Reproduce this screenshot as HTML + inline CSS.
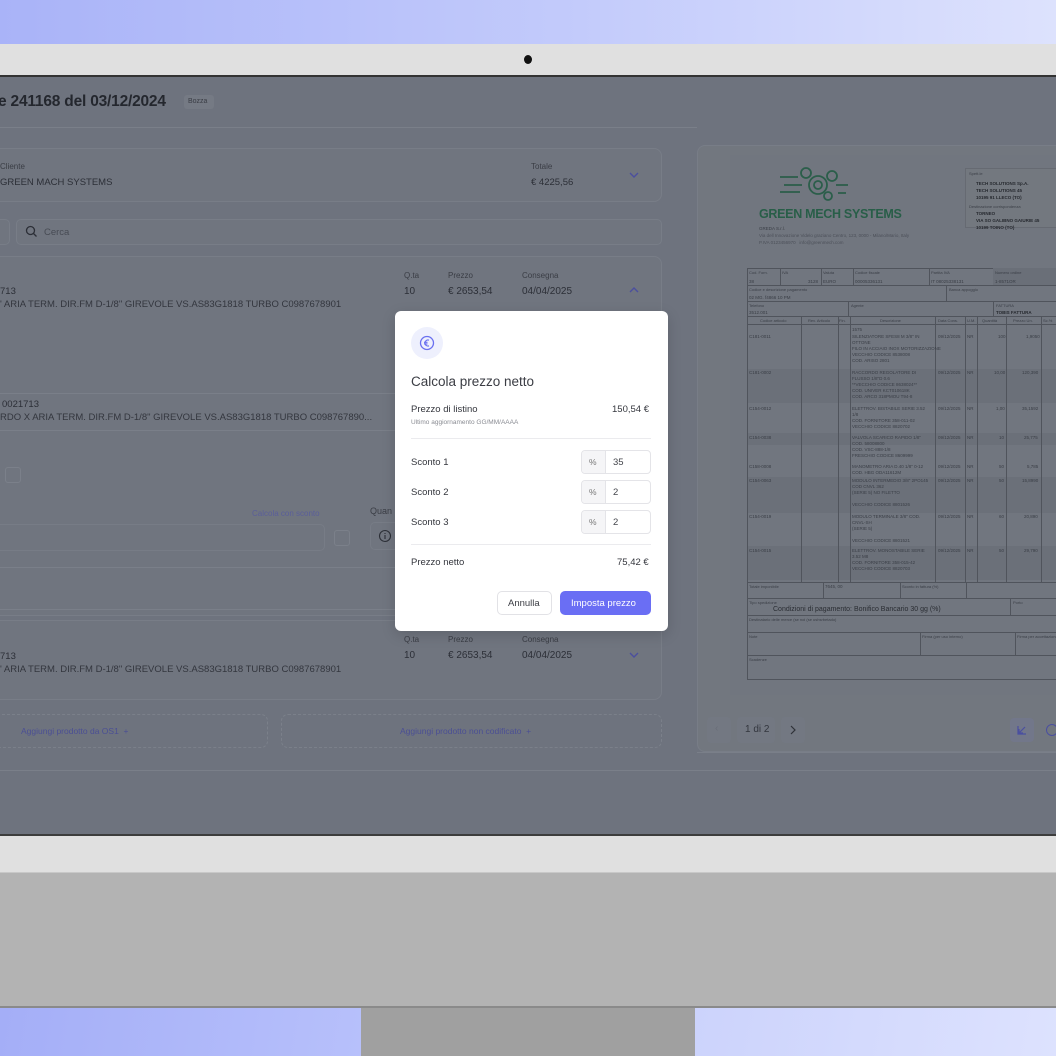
<!DOCTYPE html>
<html><head><meta charset="utf-8"><style>
*{margin:0;padding:0;box-sizing:border-box}
body{width:1056px;height:1056px;overflow:hidden;position:relative;font-family:"Liberation Sans",sans-serif;background:#b3b3b3}
.a{position:absolute}
.t{position:absolute;white-space:nowrap;color:#2c2f37}
.card{position:absolute;background:#70757f;border:1px solid #787d87;border-radius:8px}
.hl{position:absolute;height:1px;background:#7a7f89}
.dl{position:absolute;background:#50545c}
.dt{position:absolute;white-space:nowrap;color:#3a3e46;font-size:4.5px}
</style></head><body>
<div class="a" style="left:0;top:0;width:1056px;height:44px;background:linear-gradient(90deg,#a9b3f8 0%,#c3cbfb 55%,#dde2fd 100%)"></div>
<div class="a" style="left:0;top:44px;width:1056px;height:32px;background:#e0e0e0"></div>
<div class="a" style="left:524px;top:55px;width:8px;height:9px;border-radius:50%;background:#111"></div>
<div class="a" style="left:0;top:75px;width:1056px;height:2px;background:#333"></div>
<div class="a" style="left:0;top:77px;width:1056px;height:757px;background:#6e737e;overflow:hidden"></div>
<div class="a" style="left:0;top:834px;width:1056px;height:2px;background:#3d3d3d"></div>
<div class="a" style="left:0;top:836px;width:1056px;height:36px;background:#e0e0e0"></div>
<div class="a" style="left:0;top:872px;width:1056px;height:1px;background:#c8c8c8"></div>
<div class="a" style="left:0;top:1006px;width:1056px;height:2px;background:#8a8a8a"></div>
<div class="a" style="left:0;top:1008px;width:361px;height:48px;background:linear-gradient(100deg,#a4aef7,#b7c0fb)"></div>
<div class="a" style="left:361px;top:1008px;width:334px;height:48px;background:#a0a0a0"></div>
<div class="a" style="left:695px;top:1008px;width:361px;height:48px;background:linear-gradient(100deg,#ccd3fc,#dde2fe)"></div>

<div class="t" style="left:-2px;top:93px;font-size:15.5px;font-weight:bold;color:#24272e;letter-spacing:-0.2px">e 241168 del 03/12/2024</div>
<div class="a" style="left:184px;top:95px;width:30px;height:14px;background:#757a84;border-radius:3px"></div>
<div class="t" style="left:188px;top:98px;font-size:7px;color:#3a3d45">Bozza</div>
<div class="hl" style="left:0;top:127px;width:697px"></div>

<div class="card" style="left:-10px;top:148px;width:672px;height:54px"></div>
<div class="t" style="left:0;top:162px;font-size:8px;color:#3a3d45">Cliente</div>
<div class="t" style="left:0;top:177px;font-size:9.5px">GREEN MACH SYSTEMS</div>
<div class="t" style="left:531px;top:162px;font-size:8px;color:#3a3d45">Totale</div>
<div class="t" style="left:531px;top:177px;font-size:9.5px">€ 4225,56</div>
<svg class="a" style="left:628px;top:170px" width="12" height="10"><path d="M2 3l4 4 4-4" stroke="#4b4f9e" stroke-width="1.4" fill="none"/></svg>

<div class="card" style="left:-10px;top:219px;width:20px;height:26px;border-radius:5px"></div>
<div class="card" style="left:16px;top:219px;width:646px;height:26px;border-radius:5px"></div>
<svg class="a" style="left:25px;top:225px" width="13" height="13"><circle cx="5.5" cy="5.5" r="4" stroke="#2c2f37" stroke-width="1.3" fill="none"/><path d="M8.5 8.5l3 3" stroke="#2c2f37" stroke-width="1.3"/></svg>
<div class="t" style="left:44px;top:227px;font-size:9.5px;color:#474b54">Cerca</div>

<div class="card" style="left:-10px;top:256px;width:672px;height:360px"></div>
<div class="t" style="left:0;top:286px;font-size:9.5px">713</div>
<div class="t" style="left:0;top:299px;font-size:9.5px;color:#33363e">' ARIA TERM. DIR.FM D-1/8" GIREVOLE VS.AS83G1818 TURBO C0987678901</div>
<div class="t" style="left:404px;top:271px;font-size:8px;color:#3a3d45">Q.ta</div>
<div class="t" style="left:448px;top:271px;font-size:8px;color:#3a3d45">Prezzo</div>
<div class="t" style="left:522px;top:271px;font-size:8px;color:#3a3d45">Consegna</div>
<div class="t" style="left:404px;top:286px;font-size:10px">10</div>
<div class="t" style="left:448px;top:286px;font-size:10px">€ 2653,54</div>
<div class="t" style="left:522px;top:286px;font-size:10px">04/04/2025</div>
<svg class="a" style="left:628px;top:285px" width="12" height="10"><path d="M2 7l4-4 4 4" stroke="#4b4f9e" stroke-width="1.4" fill="none"/></svg>

<div class="hl" style="left:0;top:393px;width:662px"></div>
<div class="hl" style="left:0;top:430px;width:662px"></div>
<div class="t" style="left:2px;top:399px;font-size:9.5px">0021713</div>
<div class="t" style="left:0;top:412px;font-size:9.5px;color:#33363e">RDO X ARIA TERM. DIR.FM D-1/8" GIREVOLE VS.AS83G1818 TURBO C098767890...</div>
<div class="a" style="left:5px;top:467px;width:16px;height:16px;border:1px solid #7b808a;border-radius:3px"></div>
<div class="t" style="left:252px;top:509px;font-size:8px;color:#5a5e9a">Calcola con sconto</div>
<div class="t" style="left:370px;top:506px;font-size:9px;color:#3a3d45">Quan</div>
<div class="a" style="left:-5px;top:524px;width:330px;height:27px;border:1px solid #777c86;border-radius:5px"></div>
<div class="a" style="left:334px;top:530px;width:16px;height:16px;border:1px solid #7b808a;border-radius:3px"></div>
<div class="a" style="left:370px;top:522px;width:30px;height:28px;border:1px solid #777c86;border-radius:5px 0 0 5px;border-right:none"></div>
<svg class="a" style="left:378px;top:529px" width="14" height="14"><circle cx="7" cy="7" r="5.5" stroke="#2c2f37" stroke-width="1.1" fill="none"/><path d="M7 6v4M7 4v1" stroke="#2c2f37" stroke-width="1.1"/></svg>
<div class="hl" style="left:0;top:567px;width:662px"></div>
<div class="hl" style="left:0;top:609px;width:662px"></div>

<div class="card" style="left:-10px;top:620px;width:672px;height:80px"></div>
<div class="t" style="left:0;top:651px;font-size:9.5px">713</div>
<div class="t" style="left:0;top:664px;font-size:9.5px;color:#33363e">' ARIA TERM. DIR.FM D-1/8" GIREVOLE VS.AS83G1818 TURBO C0987678901</div>
<div class="t" style="left:404px;top:635px;font-size:8px;color:#3a3d45">Q.ta</div>
<div class="t" style="left:448px;top:635px;font-size:8px;color:#3a3d45">Prezzo</div>
<div class="t" style="left:522px;top:635px;font-size:8px;color:#3a3d45">Consegna</div>
<div class="t" style="left:404px;top:650px;font-size:10px">10</div>
<div class="t" style="left:448px;top:650px;font-size:10px">€ 2653,54</div>
<div class="t" style="left:522px;top:650px;font-size:10px">04/04/2025</div>
<svg class="a" style="left:628px;top:650px" width="12" height="10"><path d="M2 3l4 4 4-4" stroke="#4b4f9e" stroke-width="1.4" fill="none"/></svg>

<div class="a" style="left:-10px;top:714px;width:278px;height:34px;border:1px dashed #7b808a;border-radius:7px"></div>
<div class="a" style="left:281px;top:714px;width:381px;height:34px;border:1px dashed #7b808a;border-radius:7px"></div>
<div class="t" style="left:21px;top:726px;font-size:8.5px;color:#4b4f94">Aggiungi prodotto da OS1 &nbsp;+</div>
<div class="t" style="left:400px;top:726px;font-size:8.5px;color:#4b4f94">Aggiungi prodotto non codificato &nbsp;+</div>
<div class="hl" style="left:0;top:770px;width:1056px"></div>

<div class="a" style="left:697px;top:145px;width:370px;height:607px;background:#72777f;border:1px solid #787d87;border-radius:8px"></div>
<div class="a" style="left:730px;top:155px;width:330px;height:540px;background:#71767f"></div>
<svg class="a" style="left:778px;top:163px" width="72" height="40">
<g stroke="#2b5e4a" stroke-width="1.8" fill="none">
<circle cx="40" cy="22" r="9"/><circle cx="40" cy="22" r="4"/>
<circle cx="28" cy="10" r="5"/><circle cx="54" cy="13" r="5"/><circle cx="50" cy="33" r="4"/>
<path d="M2 14h18M6 22h18M2 29h20M58 22h12M60 30h8"/>
</g></svg>
<div class="t" style="left:759px;top:207px;font-size:12.5px;font-weight:bold;color:#285e48;letter-spacing:-0.3px">GREEN MECH SYSTEMS</div>
<div class="dt" style="left:759px;top:226px">GREDA S.r.l.</div>
<div class="dt" style="left:759px;top:233px;color:#4c5059">Via dell Innovazione Videlo graziano Centro, 123, 0000 - Milano/Mario, Italy</div>
<div class="dt" style="left:759px;top:240px;color:#4c5059">P.IVA 0123456970 &nbsp; info@greenmech.com</div>
<div class="a" style="left:965px;top:168px;width:95px;height:60px;border:1px solid #666a72;background:#73787f"></div>
<div class="dt" style="left:969px;top:171px;font-size:4px">Spett.le</div>
<div class="dt" style="left:976px;top:181px;font-weight:bold;color:#26292f">TECH SOLUTIONS Sp.A.</div>
<div class="dt" style="left:976px;top:188px;font-weight:bold;color:#26292f">TECH SOLUTIONS 45</div>
<div class="dt" style="left:976px;top:195px;font-weight:bold;color:#26292f">10195 91 LLECO (TO)</div>
<div class="dt" style="left:969px;top:204px;font-size:4px">Destinazione corrispondenza</div>
<div class="dt" style="left:976px;top:211px;font-weight:bold;color:#26292f">TORNEO</div>
<div class="dt" style="left:976px;top:218px;font-weight:bold;color:#26292f">VIA SO GALIBNO GAIURIE 45</div>
<div class="dt" style="left:976px;top:225px;font-weight:bold;color:#26292f">10199 TOINO (TO)</div>
<div class="a" style="left:747px;top:268px;width:320px;height:412px;border:1px solid #50545c"></div>
<div class="dl" style="left:747px;top:285px;width:320px;height:1px"></div>
<div class="dl" style="left:747px;top:301px;width:320px;height:1px"></div>
<div class="dl" style="left:747px;top:316px;width:320px;height:1px"></div>
<div class="dl" style="left:747px;top:324px;width:320px;height:1px"></div>
<div class="dl" style="left:780px;top:268px;width:1px;height:17px"></div>
<div class="dl" style="left:821px;top:268px;width:1px;height:17px"></div>
<div class="dl" style="left:853px;top:268px;width:1px;height:17px"></div>
<div class="dl" style="left:929px;top:268px;width:1px;height:17px"></div>
<div class="dl" style="left:993px;top:268px;width:1px;height:17px"></div>
<div class="dl" style="left:946px;top:285px;width:1px;height:16px"></div>
<div class="dl" style="left:848px;top:301px;width:1px;height:15px"></div>
<div class="dl" style="left:993px;top:301px;width:1px;height:15px"></div>
<div class="a" style="left:993px;top:268px;width:70px;height:17px;background:#6a6f78"></div>
<div class="dt" style="left:749px;top:270px;font-size:4px">Cod. Forn.</div><div class="dt" style="left:749px;top:279px">38</div>
<div class="dt" style="left:782px;top:270px;font-size:4px">IVA</div><div class="dt" style="left:808px;top:279px">3128</div>
<div class="dt" style="left:823px;top:270px;font-size:4px">Valuta</div><div class="dt" style="left:823px;top:279px">EURO</div>
<div class="dt" style="left:855px;top:270px;font-size:4px">Codice fiscale</div><div class="dt" style="left:855px;top:279px">00005336131</div>
<div class="dt" style="left:931px;top:270px;font-size:4px">Partita IVA</div><div class="dt" style="left:931px;top:279px">IT 08025338131</div>
<div class="dt" style="left:995px;top:270px;font-size:4px">Numero ordine</div><div class="dt" style="left:995px;top:279px">1-8571OR</div>
<div class="dt" style="left:749px;top:287px;font-size:4px">Codice e descrizione pagamento</div><div class="dt" style="left:749px;top:295px">02 MG. f4866 10 PM</div>
<div class="dt" style="left:949px;top:287px;font-size:4px">Banca appoggio</div>
<div class="dt" style="left:749px;top:303px;font-size:4px">Telefono</div><div class="dt" style="left:749px;top:310px">3512.001</div>
<div class="dt" style="left:851px;top:303px;font-size:4px">Agente</div>
<div class="dt" style="left:996px;top:303px;font-size:4px">FATTURA</div><div class="dt" style="left:996px;top:310px;font-weight:bold;color:#26292f">TOBIS FATTURA</div>
<div class="dt" style="left:760px;top:318px;font-size:4px">Codice articolo</div>
<div class="dt" style="left:808px;top:318px;font-size:4px">Rev. Articolo</div>
<div class="dt" style="left:839px;top:318px;font-size:4px">Fin.</div>
<div class="dt" style="left:880px;top:318px;font-size:4px">Descrizione</div>
<div class="dt" style="left:938px;top:318px;font-size:4px">Data Cons.</div>
<div class="dt" style="left:967px;top:318px;font-size:4px">U.M.</div>
<div class="dt" style="left:982px;top:318px;font-size:4px">Quantità</div>
<div class="dt" style="left:1013px;top:318px;font-size:4px">Prezzo Un.</div>
<div class="dt" style="left:1043px;top:318px;font-size:4px">Sc.%</div>
<div class="a" style="left:748px;top:369px;width:318px;height:34px;background:#6b7079"></div>
<div class="a" style="left:748px;top:433px;width:318px;height:12px;background:#6b7079"></div>
<div class="a" style="left:748px;top:477px;width:318px;height:36px;background:#6b7079"></div>
<div class="a" style="left:748px;top:546px;width:318px;height:34px;background:#6b7079"></div>
<div class="dl" style="left:801px;top:316px;width:1px;height:266px"></div>
<div class="dl" style="left:838px;top:316px;width:1px;height:266px"></div>
<div class="dl" style="left:850px;top:316px;width:1px;height:266px"></div>
<div class="dl" style="left:935px;top:316px;width:1px;height:266px"></div>
<div class="dl" style="left:965px;top:316px;width:1px;height:266px"></div>
<div class="dl" style="left:977px;top:316px;width:1px;height:266px"></div>
<div class="dl" style="left:1006px;top:316px;width:1px;height:266px"></div>
<div class="dl" style="left:1041px;top:316px;width:1px;height:266px"></div>
<div class="dt" style="left:852px;top:327px">1575</div>
<div class="dt" style="left:749px;top:334px">C181-0011</div><div class="dt" style="left:852px;top:334px;line-height:6px">SILENZIATORE SFES8 M 3/8" IN<br>OTTONE<br>FILO IN ACCIAIO INOX MOTORIZZAZIONE<br>VECCHIO CODICE 8538008<br>COD. ARISO 2801</div><div class="dt" style="left:938px;top:334px">09/12/2025</div><div class="dt" style="left:967px;top:334px">NR</div><div class="dt" style="left:998px;top:334px">100</div><div class="dt" style="left:1026px;top:334px">1,9050</div>
<div class="dt" style="left:749px;top:370px">C181-0002</div><div class="dt" style="left:852px;top:370px;line-height:6px">RACCORDO REGOLATORE DI<br>FLUSSO 1/8"D 0.6<br>**VECCHIO CODICE 8638024**<br>COD. UNIVER KCT010618K<br>COD. ARCO 318PMOU T94-8</div><div class="dt" style="left:938px;top:370px">09/12/2025</div><div class="dt" style="left:967px;top:370px">NR</div><div class="dt" style="left:994px;top:370px">10,00</div><div class="dt" style="left:1022px;top:370px">120,390</div>
<div class="dt" style="left:749px;top:406px">C154-0012</div><div class="dt" style="left:852px;top:406px;line-height:6px">ELETTROV. BISTABILE SERIE 3.52<br>1/8<br>COD. FORNITORE 358-011-02<br>VECCHIO CODICE 8820702</div><div class="dt" style="left:938px;top:406px">09/12/2025</div><div class="dt" style="left:967px;top:406px">NR</div><div class="dt" style="left:996px;top:406px">1,00</div><div class="dt" style="left:1022px;top:406px">35,1592</div>
<div class="dt" style="left:749px;top:435px">C154-0038</div><div class="dt" style="left:852px;top:435px;line-height:6px">VALVOLA SCARICO RAPIDO 1/8"<br>COD. 58008800<br>COD. VSC-888-1/8<br>FRESCHIO CODICE 8609999</div><div class="dt" style="left:938px;top:435px">09/12/2025</div><div class="dt" style="left:967px;top:435px">NR</div><div class="dt" style="left:999px;top:435px">10</div><div class="dt" style="left:1024px;top:435px">25,775</div>
<div class="dt" style="left:749px;top:464px">C158-0008</div><div class="dt" style="left:852px;top:464px;line-height:6px">MANOMETRO ARIA D.40 1/8" 0-12<br>COD. HBG ODA11612M</div><div class="dt" style="left:938px;top:464px">09/12/2025</div><div class="dt" style="left:967px;top:464px">NR</div><div class="dt" style="left:999px;top:464px">50</div><div class="dt" style="left:1027px;top:464px">5,785</div>
<div class="dt" style="left:749px;top:478px">C154-0063</div><div class="dt" style="left:852px;top:478px;line-height:6px">MODULO INTERMEDIO 3/8" 2PO145<br>COD CNVL 362<br>(SERIE 5) NO FILETTO<br><br>VECCHIO CODICE 8801526</div><div class="dt" style="left:938px;top:478px">09/12/2025</div><div class="dt" style="left:967px;top:478px">NR</div><div class="dt" style="left:999px;top:478px">50</div><div class="dt" style="left:1022px;top:478px">15,8990</div>
<div class="dt" style="left:749px;top:514px">C154-0019</div><div class="dt" style="left:852px;top:514px;line-height:6px">MODULO TERMINALE 3/8" COD.<br>CNVL-SH<br>(SERIE 5)<br><br>VECCHIO CODICE 8801521</div><div class="dt" style="left:938px;top:514px">09/12/2025</div><div class="dt" style="left:967px;top:514px">NR</div><div class="dt" style="left:999px;top:514px">60</div><div class="dt" style="left:1024px;top:514px">20,890</div>
<div class="dt" style="left:749px;top:548px">C154-0015</div><div class="dt" style="left:852px;top:548px;line-height:6px">ELETTROV. MONOSTABILE SERIE<br>3.52 M8<br>COD. FORNITORE 358-015-42<br>VECCHIO CODICE 8820703</div><div class="dt" style="left:938px;top:548px">09/12/2025</div><div class="dt" style="left:967px;top:548px">NR</div><div class="dt" style="left:999px;top:548px">50</div><div class="dt" style="left:1024px;top:548px">29,790</div>
<div class="dl" style="left:747px;top:582px;width:320px;height:1px"></div>
<div class="dl" style="left:747px;top:598px;width:320px;height:1px"></div>
<div class="dl" style="left:747px;top:615px;width:320px;height:1px"></div>
<div class="dl" style="left:747px;top:632px;width:320px;height:1px"></div>
<div class="dl" style="left:747px;top:655px;width:320px;height:1px"></div>
<div class="dl" style="left:823px;top:582px;width:1px;height:16px"></div>
<div class="dl" style="left:900px;top:582px;width:1px;height:16px"></div>
<div class="dl" style="left:966px;top:582px;width:1px;height:16px"></div>
<div class="dl" style="left:1010px;top:598px;width:1px;height:17px"></div>
<div class="dl" style="left:920px;top:632px;width:1px;height:23px"></div>
<div class="dl" style="left:1015px;top:632px;width:1px;height:23px"></div>
<div class="dt" style="left:749px;top:584px;font-size:4px">Totale imponibile</div>
<div class="dt" style="left:825px;top:584px">7645, 00</div>
<div class="dt" style="left:902px;top:584px;font-size:4px">Sconto in fattura (%)</div>
<div class="dt" style="left:749px;top:600px;font-size:4px">Tipo spedizione</div>
<div class="dt" style="left:773px;top:606px;font-size:7px;color:#2a2d33">Condizioni di pagamento: Bonifico Bancario 30 gg (%)</div>
<div class="dt" style="left:1013px;top:600px;font-size:4px">Porto</div>
<div class="dt" style="left:749px;top:617px;font-size:4px">Destinatario delle merce (se noi (se ushsrbetado)</div>
<div class="dt" style="left:749px;top:634px;font-size:4px">Note</div>
<div class="dt" style="left:922px;top:634px;font-size:4px">Firma (per uso interno)</div>
<div class="dt" style="left:1017px;top:634px;font-size:4px">Firma per accettazione</div>
<div class="dt" style="left:749px;top:657px;font-size:4px">Scadenze</div>
<div class="hl" style="left:697px;top:752px;width:359px;background:#7a7f89"></div>
<div class="a" style="left:707px;top:717px;width:24px;height:26px;background:#737882;border-radius:4px"></div>
<div class="t" style="left:715px;top:723px;font-size:10px;color:#6a6e78">‹</div>
<div class="a" style="left:737px;top:717px;width:38px;height:26px;background:#737882;border-radius:4px"></div>
<div class="t" style="left:745px;top:724px;font-size:10px;color:#33363e">1 di 2</div>
<div class="a" style="left:781px;top:717px;width:24px;height:26px;background:#737882;border-radius:4px"></div>
<svg class="a" style="left:787px;top:724px" width="12" height="12"><path d="M4 2l4 4-4 4" stroke="#2f3238" stroke-width="1.2" fill="none"/></svg>
<div class="a" style="left:1010px;top:718px;width:24px;height:24px;background:#72778a;border-radius:4px"></div>
<svg class="a" style="left:1016px;top:724px" width="12" height="12"><path d="M2 2v8h8M3 9l6-6M3 5v4h4" stroke="#4a4fa0" stroke-width="1.2" fill="none"/></svg>
<div class="a" style="left:1046px;top:724px;width:12px;height:12px;border:1.3px solid #4a4fa0;border-radius:50%"></div>

<div class="a" style="left:395px;top:311px;width:273px;height:320px;background:#fff;border-radius:6px;box-shadow:0 4px 14px rgba(0,0,0,.15)"></div>
<div class="a" style="left:411px;top:327px;width:32px;height:32px;border-radius:50%;background:#eef0fd"></div>
<svg class="a" style="left:419px;top:335px" width="16" height="16"><circle cx="8" cy="8" r="6.5" stroke="#6a70f0" stroke-width="1.3" fill="none"/><path d="M10 5.2a3 3 0 1 0 0 5.6M5 7.3h3.5M5 8.9h3.5" stroke="#6a70f0" stroke-width="1.1" fill="none"/></svg>
<div class="t" style="left:411px;top:374px;font-size:13.5px;color:#3b3d44">Calcola prezzo netto</div>
<div class="t" style="left:411px;top:404px;font-size:9.5px;color:#34363d">Prezzo di listino</div>
<div class="t" style="left:612px;top:404px;font-size:9.5px;color:#34363d">150,54 €</div>
<div class="t" style="left:411px;top:419px;font-size:6.5px;color:#8a8c93">Ultimo aggiornamento GG/MM/AAAA</div>
<div class="a" style="left:411px;top:438px;width:240px;height:1px;background:#ebebee"></div>
<div class="t" style="left:411px;top:457px;font-size:9.5px;color:#34363d">Sconto 1</div>
<div class="t" style="left:411px;top:487px;font-size:9.5px;color:#34363d">Sconto 2</div>
<div class="t" style="left:411px;top:517px;font-size:9.5px;color:#34363d">Sconto 3</div>
<div class="a" style="left:581px;top:450px;width:70px;height:24px;border:1px solid #e4e4e8;border-radius:4px;overflow:hidden"><div style="position:absolute;left:0;top:0;width:24px;height:24px;background:#f5f5f7;border-right:1px solid #e4e4e8"></div></div>
<div class="a" style="left:581px;top:480px;width:70px;height:24px;border:1px solid #e4e4e8;border-radius:4px;overflow:hidden"><div style="position:absolute;left:0;top:0;width:24px;height:24px;background:#f5f5f7;border-right:1px solid #e4e4e8"></div></div>
<div class="a" style="left:581px;top:510px;width:70px;height:24px;border:1px solid #e4e4e8;border-radius:4px;overflow:hidden"><div style="position:absolute;left:0;top:0;width:24px;height:24px;background:#f5f5f7;border-right:1px solid #e4e4e8"></div></div>
<div class="t" style="left:589px;top:457px;font-size:8.5px;color:#777">%</div>
<div class="t" style="left:589px;top:487px;font-size:8.5px;color:#777">%</div>
<div class="t" style="left:589px;top:517px;font-size:8.5px;color:#777">%</div>
<div class="t" style="left:613px;top:457px;font-size:9.5px;color:#44464c">35</div>
<div class="t" style="left:613px;top:487px;font-size:9.5px;color:#44464c">2</div>
<div class="t" style="left:613px;top:517px;font-size:9.5px;color:#44464c">2</div>
<div class="a" style="left:411px;top:544px;width:240px;height:1px;background:#ebebee"></div>
<div class="t" style="left:411px;top:557px;font-size:9.5px;color:#34363d">Prezzo netto</div>
<div class="t" style="left:617px;top:557px;font-size:9.5px;color:#34363d">75,42 €</div>
<div class="a" style="left:497px;top:591px;width:55px;height:24px;border:1px solid #e2e2e6;border-radius:5px"></div>
<div class="t" style="left:508px;top:598px;font-size:9.5px;color:#3b3d44">Annulla</div>
<div class="a" style="left:560px;top:591px;width:91px;height:24px;background:#6a6ef4;border-radius:5px"></div>
<div class="t" style="left:571px;top:598px;font-size:9.5px;color:#fff">Imposta prezzo</div>
</body></html>
